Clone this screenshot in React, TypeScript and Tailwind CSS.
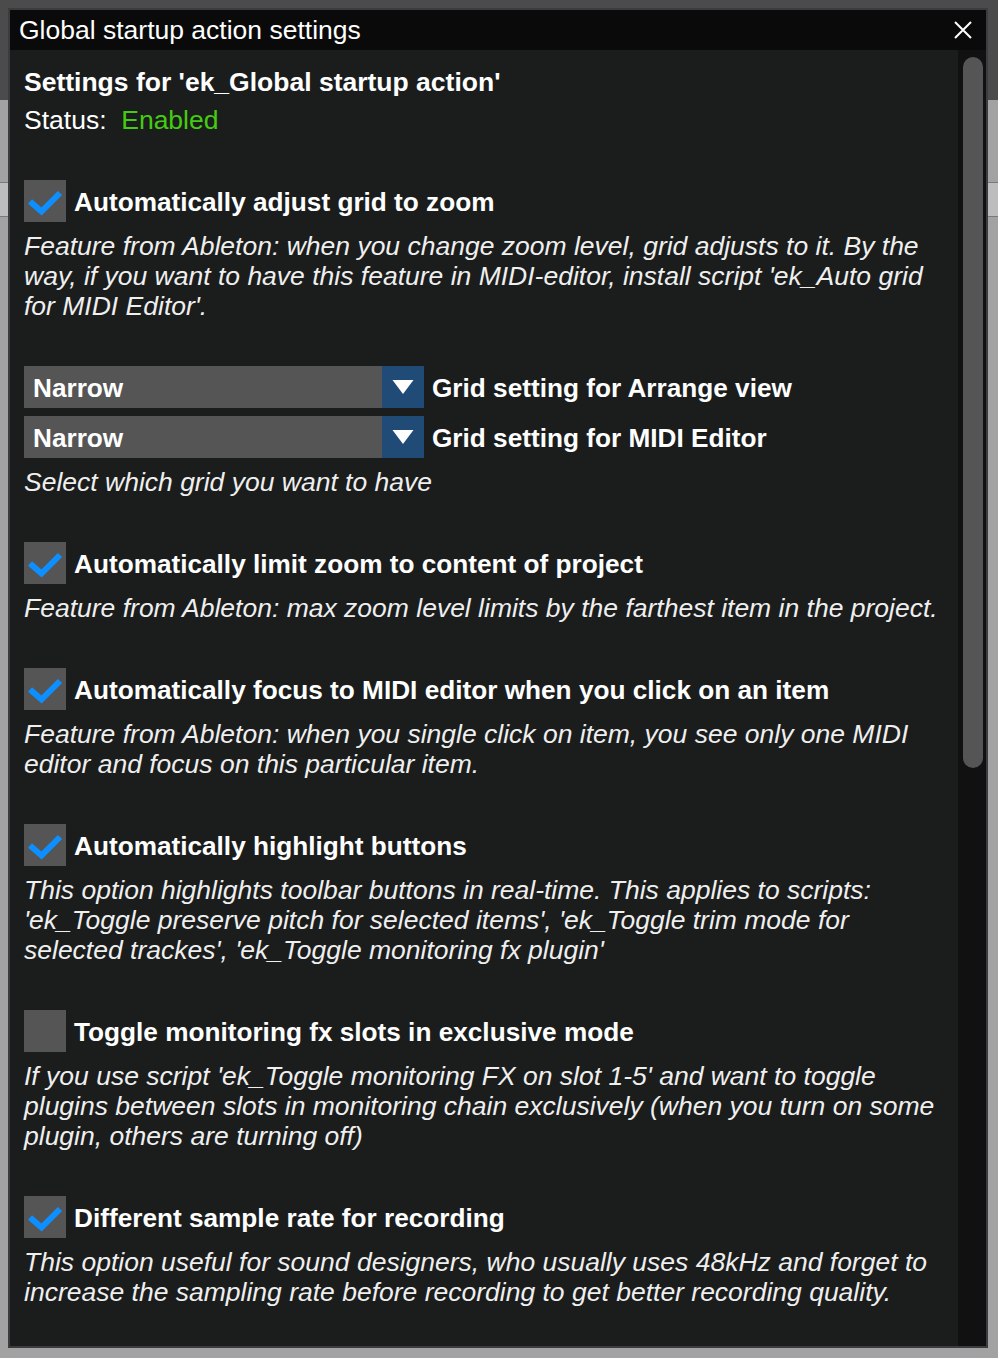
import React from 'react';

type Option = {
  title: string;
  checked: boolean;
  lines: string[];
};

const Check = () => (
  <svg width="42" height="42" viewBox="0 0 42 42">
    <path d="M6 21.5 L17.5 31.5 L36 13" fill="none" stroke="#0e8fff" strokeWidth="6" strokeLinejoin="miter" />
  </svg>
);

const Checkbox: React.FC<{ checked: boolean }> = ({ checked }) => (
  <div className="w-[42px] h-[42px] bg-[#555555] shrink-0">{checked && <Check />}</div>
);

const Dropdown: React.FC<{ value: string; label: string }> = ({ value, label }) => (
  <div className="flex items-center h-[42px]">
    <div className="w-[400px] h-[42px] bg-[#555555] flex items-center">
      <span className="flex-1 pl-[9px] pt-[4px] font-bold text-white text-[26.2px]">{value}</span>
      <div className="w-[42px] h-[42px] bg-[#1f4b76] flex items-center justify-center">
        <svg width="22" height="16" viewBox="0 0 22 16">
          <path d="M0.5 1 L21.5 1 L11 15 Z" fill="#ffffff" />
        </svg>
      </div>
    </div>
    <span className="ml-[8px] pt-[4px] font-bold text-white text-[26.2px]">{label}</span>
  </div>
);

const Desc: React.FC<{ lines: string[] }> = ({ lines }) => (
  <div className="italic text-[#efefef] leading-[30px]">
    {lines.map((l) => (
      <div key={l} className="whitespace-nowrap">
        {l}
      </div>
    ))}
  </div>
);

const options: Option[] = [
  {
    title: 'Automatically adjust grid to zoom',
    checked: true,
    lines: [
      'Feature from Ableton: when you change zoom level, grid adjusts to it. By the',
      "way, if you want to have this feature in MIDI-editor, install script 'ek_Auto grid",
      "for MIDI Editor'.",
    ],
  },
  {
    title: 'Automatically limit zoom to content of project',
    checked: true,
    lines: ['Feature from Ableton: max zoom level limits by the farthest item in the project.'],
  },
  {
    title: 'Automatically focus to MIDI editor when you click on an item',
    checked: true,
    lines: [
      'Feature from Ableton: when you single click on item, you see only one MIDI',
      'editor and focus on this particular item.',
    ],
  },
  {
    title: 'Automatically highlight buttons',
    checked: true,
    lines: [
      'This option highlights toolbar buttons in real-time. This applies to scripts:',
      "'ek_Toggle preserve pitch for selected items', 'ek_Toggle trim mode for",
      "selected trackes', 'ek_Toggle monitoring fx plugin'",
    ],
  },
  {
    title: 'Toggle monitoring fx slots in exclusive mode',
    checked: false,
    lines: [
      "If you use script 'ek_Toggle monitoring FX on slot 1-5' and want to toggle",
      'plugins between slots in monitoring chain exclusively (when you turn on some',
      'plugin, others are turning off)',
    ],
  },
  {
    title: 'Different sample rate for recording',
    checked: true,
    lines: [
      'This option useful for sound designers, who usually uses 48kHz and forget to',
      'increase the sampling rate before recording to get better recording quality.',
    ],
  },
];

const OptionBlock: React.FC<{ o: Option }> = ({ o }) => (
  <div>
    <div className="flex items-center h-[42px]">
      <Checkbox checked={o.checked} />
      <span className="ml-[8px] pt-[4px] font-bold text-white text-[26.2px]">{o.title}</span>
    </div>
    <div className="mt-[9px]">
      <Desc lines={o.lines} />
    </div>
  </div>
);

export default function App() {
  const [first, ...rest] = options;
  return (
    <div
      className="w-[998px] h-[1358px] overflow-hidden pl-[8px] pt-[8px] bg-[linear-gradient(to_bottom,#4b4b4b_0px,#4b4b4b_100px,#a2a2a2_100px,#a2a2a2_182px,#7a7a7a_182px,#7a7a7a_183px,#bdbdbd_183px,#bdbdbd_216px,#7a7a7a_216px,#7a7a7a_217px,#a2a2a2_217px)]"
      style={{ fontFamily: '"Liberation Sans", Arial, sans-serif' }}
    >
      <div className="w-[980px] h-[1340px] border-2 border-[#3b3b40] flex flex-col text-[26.5px]">
        {/* title bar */}
        <div className="h-[40px] shrink-0 bg-[#0a0a0a] flex items-center pl-[9px] pr-[14px]">
          <span className="flex-1 text-white leading-none">Global startup action settings</span>
          <svg width="18" height="18" viewBox="0 0 18 18">
            <path d="M1 1 L17 17 M17 1 L1 17" stroke="#ffffff" strokeWidth="2" />
          </svg>
        </div>

        <div className="flex-1 flex min-h-0">
          {/* content */}
          <div className="flex-1 bg-[#1b1d1d] pl-[14px] pt-[17px] overflow-hidden">
            <div className="font-bold text-white leading-[30px]">Settings for 'ek_Global startup action'</div>
            <div className="mt-[8px] text-white leading-[30px]">
              Status:&nbsp; <span className="text-[#44cc11]">Enabled</span>
            </div>

            <div className="mt-[45px] flex flex-col gap-[45px]">
              <OptionBlock o={first} />
              <div>
                <div className="flex flex-col gap-[8px]">
                  <Dropdown value="Narrow" label="Grid setting for Arrange view" />
                  <Dropdown value="Narrow" label="Grid setting for MIDI Editor" />
                </div>
                <div className="mt-[9px]">
                  <Desc lines={['Select which grid you want to have']} />
                </div>
              </div>
              {rest.map((o) => (
                <OptionBlock key={o.title} o={o} />
              ))}
            </div>
          </div>

          {/* scrollbar */}
          <div className="w-[28px] shrink-0 bg-[#111111] pl-[5px] pt-[7px]">
            <div className="w-[20px] h-[711px] rounded-full bg-[#555555]" />
          </div>
        </div>
      </div>
    </div>
  );
}
